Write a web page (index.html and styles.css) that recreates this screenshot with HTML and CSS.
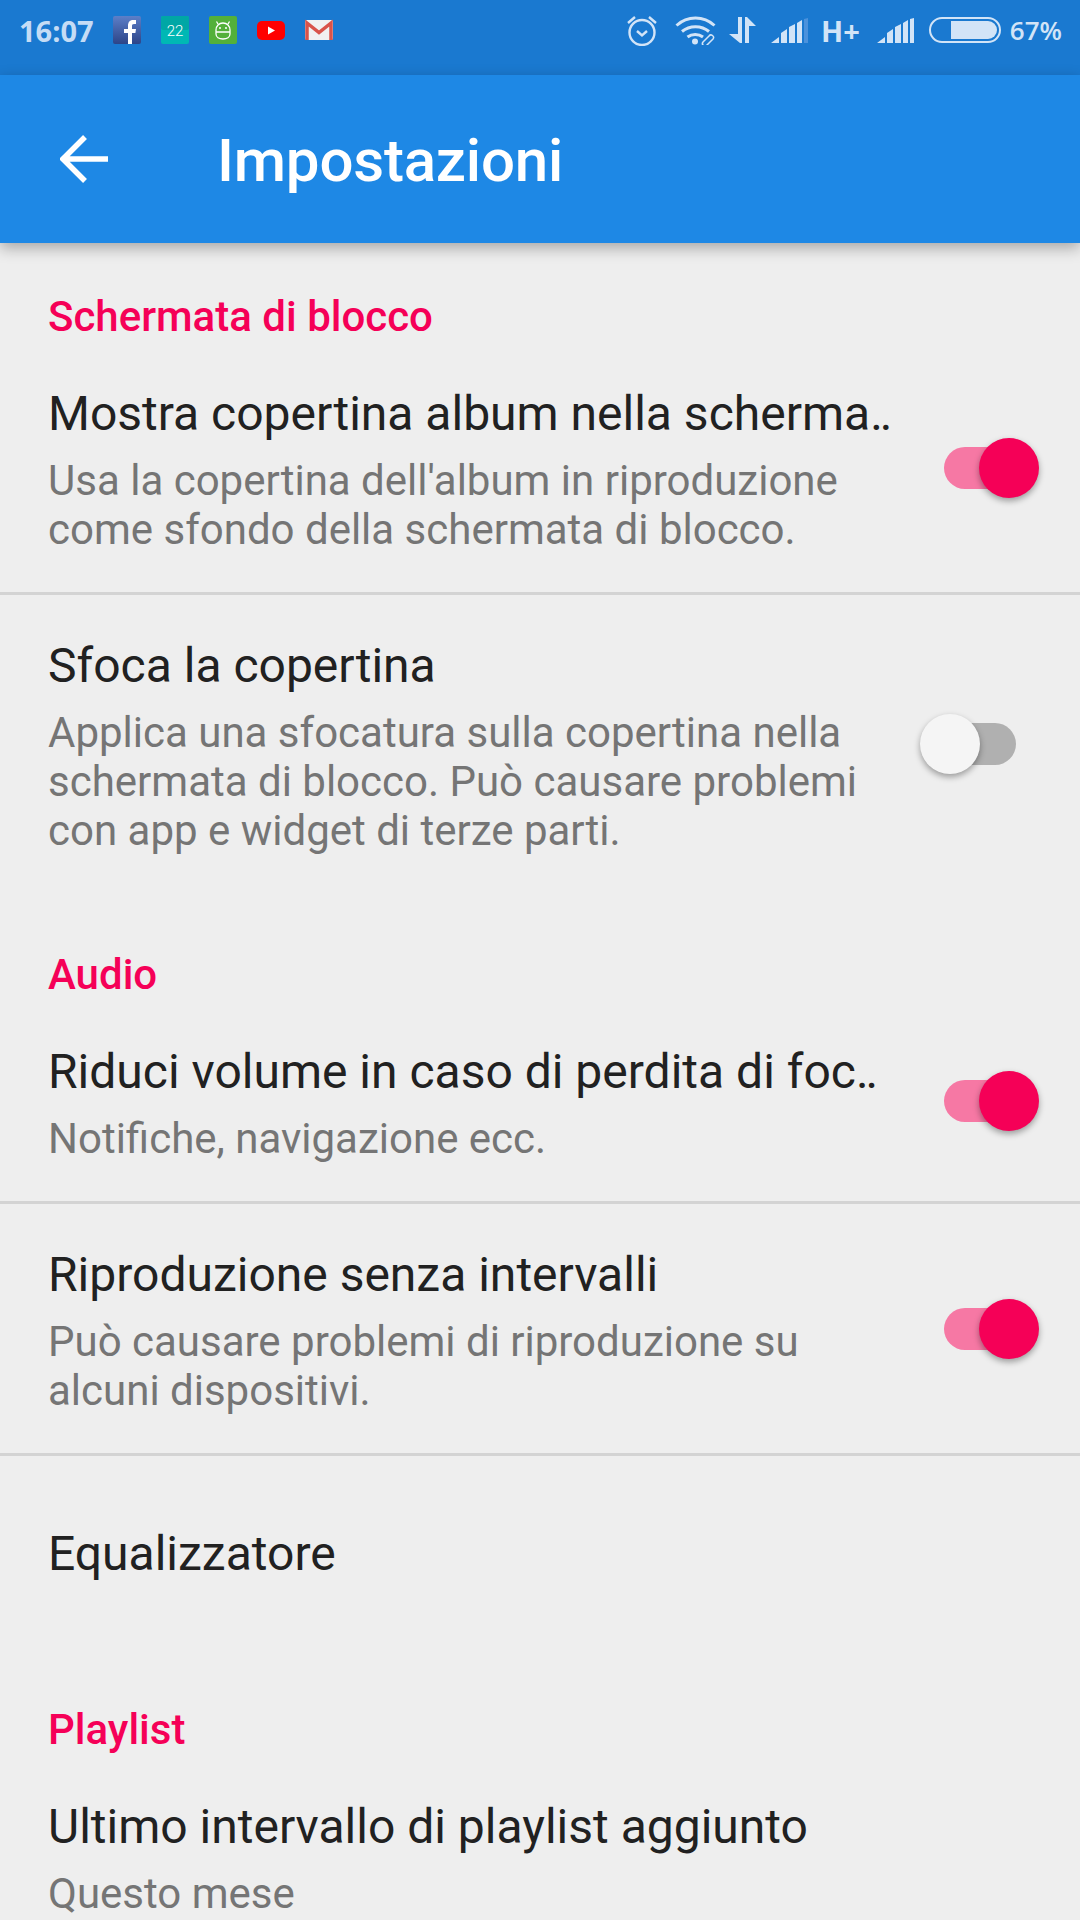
FILE: index.html
```html
<!DOCTYPE html>
<html lang="it">
<head>
  <meta charset="UTF-8" />
  <title>Impostazioni</title>
  <link rel="stylesheet" href="styles.css">
</head>
<body>

  <div class="status-bar">
    <span class="clock">16:07</span>
    <div class="notif-icons">
      <svg class="notif" viewBox="0 0 28 28">
        <defs><linearGradient id="fbGrad" x1="0" y1="0" x2="0" y2="1"><stop offset="0" stop-color="#5c7fc8"/><stop offset="1" stop-color="#2c4488"/></linearGradient></defs>
        <rect width="28" height="28" rx="2" fill="url(#fbGrad)"/>
        <path d="M15 28V17h-4v-4h4v-3c0-4 2-6 5-6h3v4h-2c-1.600 0-2 .7-2 2v3h4l-.6 4H19v11z" fill="#fff"/>
      </svg>
      <svg class="notif" viewBox="0 0 28 28">
        <rect width="28" height="28" rx="2" fill="#00b8b4"/>
        <rect width="28" height="14" rx="2" fill="#00a7a5"/>
        <text x="14" y="20" class="cal-num">22</text>
      </svg>
      <svg class="notif" viewBox="0 0 28 28">
        <rect width="28" height="28" rx="2" fill="#53b03a"/>
        <path d="M9 8 7.500 5.500M19 8l1.500-2.500M7 14c0-4 3-7 7-7s7 3 7 7v4c0 3-3 5-7 5s-7-2-7-5zM7 16h14" fill="none" stroke="#fff" stroke-width="1.300"/>
        <circle cx="11" cy="12" r="1" fill="#fff"/><circle cx="17" cy="12" r="1" fill="#fff"/>
      </svg>
      <svg class="notif" viewBox="0 0 28 28">
        <rect x="0" y="5" width="28" height="19" rx="5" fill="#f00"/>
        <path d="M11 10.500v8l7-4z" fill="#fff"/>
      </svg>
      <svg class="notif" viewBox="0 0 28 28">
        <rect x="0" y="4" width="28" height="20" rx="2" fill="#f1f1f1"/>
        <path d="M2 24V7l12 9.500L26 7v17" fill="none" stroke="#d9534a" stroke-width="3.500"/>
      </svg>
    </div>
    <div class="sys-icons">
      <svg class="ic-alarm" viewBox="0 0 32 32" fill="none" stroke="#d2e4f7" stroke-width="2.400">
        <circle cx="16" cy="18.500" r="12.500"/>
        <path d="M11 17l5 4.500 5-4.500M2 9l7-6M30 9l-7-6"/>
      </svg>
      <svg class="ic-wifi" viewBox="0 0 41 29" fill="none" stroke="#d2e4f7" stroke-width="3">
        <path d="M1.500 9.500c11-10 27-10 38 0M7 15.500c7.500-6.500 19.500-6.500 27 0M12.500 21c4.500-3.500 11-3.500 15.500 0"/>
        <circle cx="20" cy="25.500" r="3" fill="#d2e4f7" stroke="none"/>
        <path d="M28 26l6-6a2.500 2.500 0 0 1 4 3l-6 6a2.500 2.500 0 0 1-4-3z" stroke-width="1.500"/>
      </svg>
      <svg class="ic-arrows" viewBox="0 0 27 26" fill="#d2e4f7">
        <path d="M9 0h4v26h-2L0 17h9zM16 26h4V9h7L18 0h-2z"/>
      </svg>
      <svg class="ic-signal" viewBox="0 0 37 25">
        <path d="M0 25l8-6v6zM10 25V15l6-4v14zM18 25V9l6-3v19z" fill="#d2e4f7"/>
        <path d="M26 25V5l5-3v23z" fill="#d2e4f7"/>
        <path d="M33 25V1l4-1v25z" fill="#4b92dc"/>
      </svg>
      <span class="net">H+</span>
      <svg class="ic-signal" viewBox="0 0 37 25">
        <path d="M0 25l8-6v6zM10 25V15l6-4v14zM18 25V9l6-3v19zM26 25V5l5-3v23zM33 25V1l4-1v25z" fill="#d2e4f7"/>
      </svg>
      <div class="battery"><div class="battery-fill"></div></div>
      <span class="percent">67%</span>
    </div>
  </div>

  <header class="toolbar">
    <svg class="back" viewBox="0 0 48 48" fill="none" stroke="#fff" stroke-width="5.500">
      <path d="M48 24H3M25 2 3 24l22 22"/>
    </svg>
    <h1>Impostazioni</h1>
  </header>

  <main>
    <h2 class="section first">Schermata di blocco</h2>

    <div class="row divided">
      <div class="row-text">
        <div class="title">Mostra copertina album nella scherma<span class="dots">..</span></div>
        <div class="summary">Usa la copertina dell'album in riproduzione<br>come sfondo della schermata di blocco.</div>
      </div>
      <div class="switch on"><span class="track"></span><span class="thumb"></span></div>
    </div>

    <div class="row">
      <div class="row-text">
        <div class="title">Sfoca la copertina</div>
        <div class="summary">Applica una sfocatura sulla copertina nella<br>schermata di blocco. Può causare problemi<br>con app e widget di terze parti.</div>
      </div>
      <div class="switch"><span class="track"></span><span class="thumb"></span></div>
    </div>

    <h2 class="section">Audio</h2>

    <div class="row divided">
      <div class="row-text">
        <div class="title">Riduci volume in caso di perdita di foc<span class="dots">..</span></div>
        <div class="summary">Notifiche, navigazione ecc.</div>
      </div>
      <div class="switch on"><span class="track"></span><span class="thumb"></span></div>
    </div>

    <div class="row divided">
      <div class="row-text">
        <div class="title">Riproduzione senza intervalli</div>
        <div class="summary">Può causare problemi di riproduzione su<br>alcuni dispositivi.</div>
      </div>
      <div class="switch on"><span class="track"></span><span class="thumb"></span></div>
    </div>

    <div class="row single">
      <div class="row-text">
        <div class="title">Equalizzatore</div>
      </div>
    </div>

    <h2 class="section">Playlist</h2>

    <div class="row">
      <div class="row-text">
        <div class="title">Ultimo intervallo di playlist aggiunto</div>
        <div class="summary">Questo mese</div>
      </div>
    </div>
  </main>

</body>
</html>
```

FILE: styles.css
```css
* {
  margin: 0;
  padding: 0;
  box-sizing: border-box;
}

html, body {
  height: 1920px;
  overflow: hidden;
}

body {
  background-color: #eeeeee;
  font-family: Roboto, sans-serif;
  color: #212121;
}

svg {
  display: block;
  flex: none;
}

.status-bar {
  height: 75px;
  background-color: #1a79d0;
  display: flex;
  align-items: center;
  padding: 0 18px 15px 19px;
  color: #c5dcf5;
}

.clock {
  font-family: "Open Sans", sans-serif;
  font-weight: 700;
  font-size: 29px;
  width: 94px;
}

.notif-icons {
  display: flex;
  gap: 20px;
}

.notif {
  width: 28px;
  height: 28px;
}

.cal-num {
  font-family: Roboto, sans-serif;
  font-size: 15px;
  font-weight: 300;
  fill: #fff;
  text-anchor: middle;
}

.sys-icons {
  margin-left: auto;
  display: flex;
  align-items: center;
  color: #d2e4f7;
}

.ic-alarm {
  width: 32px;
  height: 32px;
  margin-right: 17px;
}

.ic-wifi {
  width: 41px;
  height: 29px;
  margin-right: 13px;
}

.ic-arrows {
  width: 27px;
  height: 26px;
  margin-right: 15px;
}

.ic-signal {
  width: 37px;
  height: 25px;
}

.net {
  font-family: "Open Sans", sans-serif;
  font-weight: 700;
  font-size: 29px;
  margin: 0 17px 0 13px;
}

.battery {
  width: 72px;
  height: 26px;
  margin-left: 15px;
  margin-right: 9px;
  border: 2px solid #d2e4f7;
  border-radius: 13px;
  padding: 2px;
  display: flex;
  justify-content: flex-end;
}

.battery-fill {
  width: 46px;
  background-color: #d2e4f7;
  border-radius: 0 10px 10px 0;
}

.percent {
  font-family: "Open Sans", sans-serif;
  font-weight: 600;
  font-size: 26px;
}

.toolbar {
  height: 168px;
  background-color: #1e88e5;
  display: flex;
  align-items: center;
  padding-left: 60px;
  box-shadow: 0 5px 14px rgba(0, 0, 0, 0.3);
  position: relative;
}

.back {
  width: 48px;
  height: 48px;
}

.toolbar h1 {
  margin-left: 109px;
  padding-top: 2px;
  color: white;
  font-size: 60px;
  font-weight: 500;
  letter-spacing: -0.2px;
}

.section {
  color: #f50057;
  font-size: 42px;
  font-weight: 500;
  line-height: 50px;
  padding: 0 0 1px 48px;
  margin-top: 57px;
}

.section.first {
  margin-top: 49px;
}

.row {
  display: flex;
  align-items: center;
  padding: 40px 41px 38px 48px;
}

.row.divided {
  border-bottom: 3px solid #d3d3d3;
}

.row.single {
  padding: 67px 41px 63px 48px;
}

.row-text {
  flex: 1;
  min-width: 0;
}

.title {
  font-size: 48px;
  line-height: 62px;
  white-space: nowrap;
}

.dots {
  letter-spacing: -3px;
}

.summary {
  font-size: 42px;
  line-height: 49px;
  color: #757575;
  margin-top: 11px;
  white-space: nowrap;
}

.switch {
  width: 119px;
  height: 60px;
  flex: none;
  position: relative;
  top: -1px;
}

.track {
  position: absolute;
  left: 24px;
  top: 9px;
  width: 72px;
  height: 42px;
  border-radius: 21px;
  background-color: #b0b0b0;
}

.thumb {
  position: absolute;
  left: 0;
  top: 0;
  width: 60px;
  height: 60px;
  border-radius: 50%;
  background-color: #f5f5f5;
  box-shadow: 0 3px 6px rgba(0, 0, 0, 0.35);
}

.switch.on .track {
  background-color: #f678a4;
}

.switch.on .thumb {
  left: 59px;
  background-color: #f50057;
}
```
